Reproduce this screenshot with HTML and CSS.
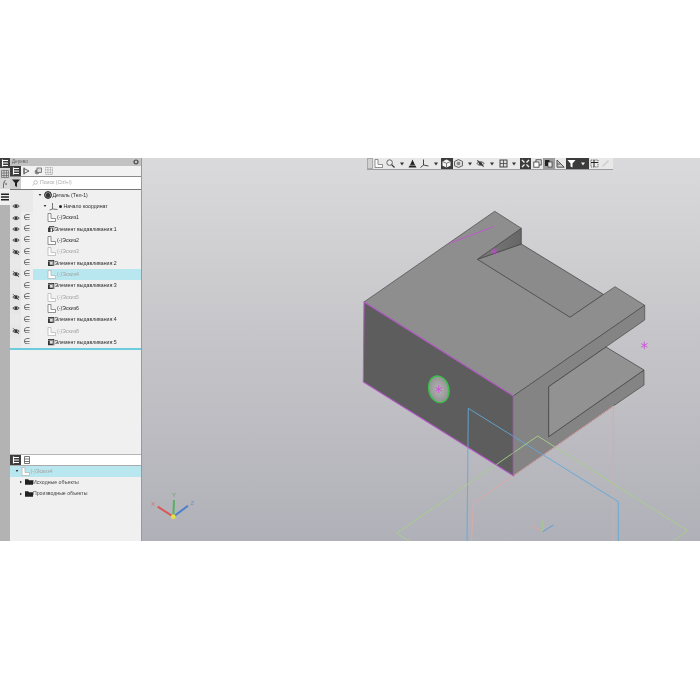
FILE: index.html
```html
<!DOCTYPE html>
<html lang="ru">
<head>
<meta charset="utf-8">
<title>Дерево</title>
<link rel="stylesheet" href="styles.css">
</head>
<body>
<svg class="defs" width="0" height="0" aria-hidden="true">
  <symbol id="eye" viewBox="0 0 10 8"><path d="M1 4C3 1.5 7 1.5 9 4 7 6.5 3 6.5 1 4Z" fill="none" stroke="#333" stroke-width="1"/><circle cx="5" cy="4" r="1.7" fill="#333"/></symbol>
  <symbol id="eyeoff" viewBox="0 0 10 8"><path d="M1 4C3 1.5 7 1.5 9 4 7 6.5 3 6.5 1 4Z" fill="none" stroke="#333" stroke-width="1"/><circle cx="5" cy="4" r="1.7" fill="#333"/><path d="M1.5 .5 8.5 7.5" stroke="#333" stroke-width="1.2"/></symbol>
  <symbol id="sketch" viewBox="0 0 9 9"><path d="M1 .5V8.5H8.5V5.5H4V.5Z" fill="#fff" stroke="#666" stroke-width=".7"/></symbol>
  <symbol id="sketchoff" viewBox="0 0 9 9"><path d="M1 .5V8.5H8.5V5.5H4V.5Z" fill="#fff" stroke="#b0b0b0" stroke-width=".7"/></symbol>
  <symbol id="extrude" viewBox="0 0 8 8"><rect x="0" y="0" width="8" height="8" fill="#333"/><rect x="2.2" y="2.2" width="3.6" height="3.6" fill="#ddd"/><path d="M0 1.6H6.4V8" fill="none" stroke="#eee" stroke-width=".6"/></symbol>
  <symbol id="extrudeopen" viewBox="0 0 8 8"><rect x="2" y=".5" width="5.5" height="5" fill="#fff" stroke="#333"/><rect x=".5" y="2.5" width="5" height="5" fill="#fff" stroke="#333"/><rect x=".5" y="2.5" width="2.6" height="5" fill="#333"/></symbol>
  <symbol id="tree" viewBox="0 0 8 8"><path d="M1.5 .5V7.5M1.5 1.5H7M1.5 4H7M1.5 6.5H7" stroke="currentColor" fill="none" stroke-width="1.1"/></symbol>
  <symbol id="folder" viewBox="0 0 10 7"><path d="M0 0H4L5 1.2H10V7H0Z" fill="#222"/></symbol>
  <symbol id="arrow" viewBox="0 0 6 6"><path d="M1 1.5H5L3 4.5Z" fill="#333"/></symbol>
</svg>

<main class="app">
  <nav class="strip">
    <div class="strip-top">
      <span class="strip-btn on"><svg class="i8"><use href="#tree"/></svg></span>
      <span class="strip-btn"><svg class="i8" viewBox="0 0 8 8"><path d="M.5.5h7v7h-7zM.5 3h7M.5 5.5h7M3 .5v7M5.5.5v7" fill="none" stroke="#666" stroke-width=".7"/></svg></span>
      <span class="strip-btn fx">f<sub>x</sub></span>
      <span class="strip-btn plain"><svg class="i8" viewBox="0 0 8 8"><path d="M0 1.2H8M0 4H8M0 6.8H8" stroke="#222" stroke-width="1.5"/></svg></span>
    </div>
  </nav>

  <aside class="panel">
    <header class="panel-head"><span>Дерево</span>
      <svg class="gear" viewBox="0 0 6 6"><circle cx="3" cy="3" r="2" fill="none" stroke="#444" stroke-width="1.2"/></svg>
    </header>
    <div class="tabs">
      <span class="tab on"><svg class="i8"><use href="#tree"/></svg></span>
      <span class="tab"><svg class="i8" viewBox="0 0 8 8"><path d="M1 .5V7.5M1 1.5 6 4 1 6.5Z" fill="none" stroke="#555" stroke-width=".9"/></svg></span>
      <span class="tab"><svg class="i8" viewBox="0 0 8 8"><circle cx="3" cy="5" r="2.4" fill="#888"/><rect x="3" y="1" width="4.5" height="4.5" fill="#ddd" stroke="#555" stroke-width=".7"/></svg></span>
      <span class="tab"><svg class="i8" viewBox="0 0 8 8"><path d="M.5.5h7v7h-7zM.5 3h7M.5 5.5h7M3 .5v7M5.5.5v7" fill="none" stroke="#999" stroke-width=".7" stroke-dasharray="1 .6"/></svg></span>
    </div>
    <div class="search">
      <span class="funnel"><svg class="i8" viewBox="0 0 8 8"><path d="M0 .5H8L5 4V8L3 7V4Z" fill="#222"/></svg></span>
      <div class="field">
        <svg class="loupe" viewBox="0 0 6 6"><circle cx="3.6" cy="2.4" r="1.8" fill="none" stroke="#aaa" stroke-width=".7"/><path d="M2.3 3.7.5 5.5" stroke="#aaa" stroke-width=".7"/></svg>
        <span>Поиск (Ctrl+/)</span>
      </div>
    </div>

    <div class="tree">
      <div class="row"><span class="c-eye blank"></span><span class="c-in blank"></span><span class="node lvl0"><svg class="arr"><use href="#arrow"/></svg><svg class="ico part" viewBox="0 0 8 8"><circle cx="4" cy="4" r="3.4" fill="#aaa" stroke="#222"/><path d="M2 3 4 1.5 6 3V5.5L4 7 2 5.5Z" fill="#333"/></svg>Деталь (Тел-1)</span></div>
      <div class="row"><span class="c-eye"><svg class="eye"><use href="#eye"/></svg></span><span class="c-in blank"></span><span class="node lvl1"><svg class="arr"><use href="#arrow"/></svg><svg class="ico" viewBox="0 0 9 8"><path d="M3.5 .5V6.5M.5 7.5 3.5 6.5 8.5 7" fill="none" stroke="#555" stroke-width=".8"/></svg><i class="dot"></i>Начало координат</span></div>
      <div class="row"><span class="c-eye"><svg class="eye"><use href="#eye"/></svg></span><span class="c-in">∈</span><span class="node lvl2"><svg class="ico"><use href="#sketch"/></svg>(-)Эскиз1</span></div>
      <div class="row"><span class="c-eye"><svg class="eye"><use href="#eye"/></svg></span><span class="c-in">∈</span><span class="node lvl2"><svg class="ico ex"><use href="#extrudeopen"/></svg>Элемент выдавливания:1</span></div>
      <div class="row"><span class="c-eye"><svg class="eye"><use href="#eye"/></svg></span><span class="c-in">∈</span><span class="node lvl2"><svg class="ico"><use href="#sketch"/></svg>(-)Эскиз2</span></div>
      <div class="row"><span class="c-eye"><svg class="eye"><use href="#eyeoff"/></svg></span><span class="c-in">∈</span><span class="node lvl2 off"><svg class="ico"><use href="#sketchoff"/></svg>(-)Эскиз3</span></div>
      <div class="row"><span class="c-eye blank"></span><span class="c-in">∈</span><span class="node lvl2"><svg class="ico ex"><use href="#extrude"/></svg>Элемент выдавливания:2</span></div>
      <div class="row"><span class="c-eye"><svg class="eye"><use href="#eyeoff"/></svg></span><span class="c-in">∈</span><span class="node lvl2 off sel"><svg class="ico"><use href="#sketchoff"/></svg>(-)Эскиз4</span></div>
      <div class="row"><span class="c-eye blank"></span><span class="c-in">∈</span><span class="node lvl2"><svg class="ico ex"><use href="#extrude"/></svg>Элемент выдавливания:3</span></div>
      <div class="row"><span class="c-eye"><svg class="eye"><use href="#eyeoff"/></svg></span><span class="c-in">∈</span><span class="node lvl2 off"><svg class="ico"><use href="#sketchoff"/></svg>(-)Эскиз5</span></div>
      <div class="row"><span class="c-eye"><svg class="eye"><use href="#eye"/></svg></span><span class="c-in">∈</span><span class="node lvl2"><svg class="ico"><use href="#sketch"/></svg>(-)Эскиз6</span></div>
      <div class="row"><span class="c-eye blank"></span><span class="c-in">∈</span><span class="node lvl2"><svg class="ico ex"><use href="#extrude"/></svg>Элемент выдавливания:4</span></div>
      <div class="row"><span class="c-eye"><svg class="eye"><use href="#eyeoff"/></svg></span><span class="c-in">∈</span><span class="node lvl2 off"><svg class="ico"><use href="#sketchoff"/></svg>(-)Эскиз8</span></div>
      <div class="row"><span class="c-eye blank"></span><span class="c-in">∈</span><span class="node lvl2"><svg class="ico ex"><use href="#extrude"/></svg>Элемент выдавливания:5</span></div>
      <div class="tree-end"></div>
    </div>

    <div class="lower">
      <div class="lower-tabs">
        <span class="tab on"><svg class="i8"><use href="#tree"/></svg></span>
        <span class="tab"><svg class="i8" viewBox="0 0 8 8"><path d="M1.5.5h5v7h-5zM1.5 3h5M1.5 5.5h5" fill="none" stroke="#555" stroke-width=".8"/></svg></span>
      </div>
      <div class="lrow sel off"><svg class="arr"><use href="#arrow"/></svg><svg class="ico"><use href="#sketchoff"/></svg>(-)Эскиз4</div>
      <div class="lrow sub"><svg class="arr side"><use href="#arrow"/></svg><svg class="fold"><use href="#folder"/></svg>Исходные объекты</div>
      <div class="lrow sub"><svg class="arr side"><use href="#arrow"/></svg><svg class="fold"><use href="#folder"/></svg>Производные объекты</div>
    </div>
  </aside>

  <section class="view">
    <svg class="scene" viewBox="142 158 558 383" aria-hidden="true">
      <defs>
        <linearGradient id="wedge" x1="0" y1="0" x2="1" y2="0"><stop offset="0" stop-color="#7c7c7c"/><stop offset="1" stop-color="#666"/></linearGradient>
        <radialGradient id="hole" cx=".5" cy=".5" r=".6"><stop offset="0" stop-color="#b4b4b4"/><stop offset="1" stop-color="#8c8c8c"/></radialGradient>
      </defs>
      <!-- part faces -->
      <polygon points="477.3,259.3 521.3,244 603.3,294.3 570,317.3" fill="#8b8b8b" stroke="#3e3e3e" stroke-width=".7"/>
      <polygon points="521.3,228.3 521.3,244 477.3,259.3" fill="url(#wedge)" stroke="#444" stroke-width=".7"/>
      <polygon points="494.7,211.3 521.3,228.3 477.3,259.3 570,317.3 615,286.7 644.7,305.3 513.3,396 364,302" fill="#8e8e8e" stroke="#4a4a4a" stroke-width=".7"/>
      <polygon points="513.3,396 644.7,305.3 644.7,320 548.7,386.7 548.7,436.7 644,370 644,385 613.3,406 513.3,475.7" fill="#848484" stroke="#4a4a4a" stroke-width=".7"/>
      <polygon points="548.7,386.7 606,347 644,370 548.7,436.7" fill="#929292" stroke="#3e3e3e" stroke-width=".7"/>
      <polygon points="364,302 513.3,396 513.3,475.7 363.3,382" fill="#5d5d5d"/>
      <!-- reference planes -->
      <path d="M513.3 475.7 473.3 503.3 471.5 541M613.3 406V541M513.3 475.7 613.3 406" fill="none" stroke="#e0a8a8" stroke-width=".9"/>
      <path d="M468.3 408.3 618.3 501.7V541M468.3 408.3 467 541" fill="none" stroke="#62a8d8" stroke-width=".9"/>
      <path d="M396.7 533.3 537.7 436 687.7 530.7 673 541M396.7 533.3 409 541" fill="none" stroke="#a8d088" stroke-width=".9"/>
      <!-- magenta edges -->
      <path d="M364 302 513.3 396V475.7L363.3 382Z" fill="none" stroke="#b858cc" stroke-width="1.1"/>
      <path d="M450 243 494 226.5" stroke="#c058d0" stroke-width="1" fill="none"/>
      <!-- hole -->
      <ellipse cx="438.8" cy="389.3" rx="10" ry="13.5" transform="rotate(-14 438.8 389.3)" fill="url(#hole)" stroke="#3cc04c" stroke-width="1.4"/>
      <!-- centre marks -->
      <g class="mark"><path d="M438.7 385.5v7.5M435.5 387.4l6.4 3.8M435.5 391.2l6.4-3.8"/><path d="M494 248v7M491 249.7l6 3.6M491 253.3l6-3.6"/><path d="M644.3 341.6v7.5M641 343.5l6.6 3.8M641 347.3l6.6-3.8"/></g>
      <!-- small origin axes -->
      <path d="M542.7 531.7 531.7 526" stroke="#e0a0a0" stroke-width=".9"/>
      <path d="M542.7 531.7V520.7" stroke="#a0d090" stroke-width=".9"/>
      <path d="M542.7 531.7 553.5 525" stroke="#5c9cd4" stroke-width="1"/>
      <!-- triad -->
      <path d="M173.3 516.7 157.7 506.7" stroke="#d85858" stroke-width="2"/>
      <path d="M173.3 516.7 174 500" stroke="#58b060" stroke-width="2"/>
      <path d="M173.3 516.7 188 505.7" stroke="#4880d0" stroke-width="2"/>
      <circle cx="173.3" cy="516.7" r="2.4" fill="#e4e040"/>
      <text class="ax" x="151" y="506" fill="#d07070">X</text>
      <text class="ax" x="172" y="497" fill="#70a070">Y</text>
      <text class="ax" x="190.5" y="505" fill="#7090c8">Z</text>
    </svg>

    <div class="toolbar">
      <span class="tb handle"></span>
      <span class="tb"><svg class="i9"><use href="#sketch"/></svg></span>
      <span class="tb"><svg class="i9" viewBox="0 0 9 9"><circle cx="3.6" cy="3.6" r="2.8" fill="#eee" stroke="#666"/><path d="M5.6 5.6 8.5 8.5" stroke="#333" stroke-width="1.2"/></svg></span>
      <span class="tb nar"><svg class="i6"><use href="#arrow"/></svg></span>
      <span class="tb"><svg class="i9" viewBox="0 0 9 9"><path d="M4.5 .5 6 4 8.5 8.5H.5L3 4Z" fill="#222"/><path d="M1 6.3H8" stroke="#ddd" stroke-width=".6"/></svg></span>
      <span class="tb"><svg class="i9" viewBox="0 0 9 9"><path d="M3.5.5V6M3.5 6 .5 8.5M3.5 6 8.5 7" fill="none" stroke="#333" stroke-width=".9"/></svg></span>
      <span class="tb nar"><svg class="i6"><use href="#arrow"/></svg></span>
      <span class="tb dark"><svg class="i9" viewBox="0 0 9 9"><path d="M4.5.5 8.5 2.5V6.8L4.5 8.5.5 6.8V2.5Z" fill="#f4f4f4"/><path d="M.5 2.5 4.5 4.3 8.5 2.5M4.5 4.3V8.5" fill="none" stroke="#444" stroke-width=".7"/></svg></span>
      <span class="tb"><svg class="i9" viewBox="0 0 9 9"><path d="M4.5.5 8.5 2.5V6.8L4.5 8.5.5 6.8V2.5Z" fill="#ddd" stroke="#444" stroke-width=".8"/><circle cx="4.5" cy="4.5" r="1.8" fill="#888"/></svg></span>
      <span class="tb nar"><svg class="i6"><use href="#arrow"/></svg></span>
      <span class="tb"><svg class="i9"><use href="#eyeoff"/></svg></span>
      <span class="tb nar"><svg class="i6"><use href="#arrow"/></svg></span>
      <span class="tb"><svg class="i9" viewBox="0 0 9 9"><rect x="1" y="1" width="7" height="7" fill="#ddd" stroke="#444"/><path d="M1 4.5H8M4.5 1V8" stroke="#444" stroke-width=".8"/></svg></span>
      <span class="tb nar"><svg class="i6"><use href="#arrow"/></svg></span>
      <span class="tb dark"><svg class="i9" viewBox="0 0 9 9"><path d="M1 1 3.5 3.5M8 1 5.5 3.5M1 8 3.5 5.5M8 8 5.5 5.5" stroke="#eee" stroke-width="1.4"/></svg></span>
      <span class="tb"><svg class="i9" viewBox="0 0 9 9"><rect x="3" y=".8" width="5.2" height="5.2" fill="#eee" stroke="#333" stroke-width=".8"/><rect x=".8" y="3" width="5.2" height="5.2" fill="#fff" stroke="#333" stroke-width=".8"/></svg></span>
      <span class="tb mid"><svg class="i9" viewBox="0 0 9 9"><rect x="1" y="1" width="4.5" height="6" fill="#222"/><rect x="4" y="3" width="4" height="5" fill="#e8e8e8" stroke="#222" stroke-width=".6"/></svg></span>
      <span class="tb"><svg class="i9" viewBox="0 0 9 9"><path d="M1 8.2V1L8.2 8.2Z" fill="#ccc" stroke="#333" stroke-width=".8"/><path d="M1 5H4.5" stroke="#333" stroke-width=".7"/></svg></span>
      <span class="tb dark"><svg class="i9" viewBox="0 0 9 9"><path d="M.5 1H8.5L5.5 4.5V8.5L3.5 7.5V4.5Z" fill="#fff"/></svg></span>
      <span class="tb nar dark"><svg class="i6" viewBox="0 0 6 6"><path d="M1 1.5H5L3 4.5Z" fill="#eee"/></svg></span>
      <span class="tb"><svg class="i9" viewBox="0 0 9 9"><rect x="1" y="1" width="7" height="7" fill="#eee" stroke="#555" stroke-width=".8" stroke-dasharray="1.4 .8"/><path d="M4 1V8M1 3.5H8" stroke="#222" stroke-width="1"/></svg></span>
      <span class="tb"><svg class="i9" viewBox="0 0 9 9"><path d="M1.5 7.5 7.5 1.5" stroke="#ccc" stroke-width="1.4"/></svg></span>
    </div>
  </section>
</main>
</body>
</html>
```

FILE: styles.css
```css
* { box-sizing: border-box; }
html, body { margin: 0; padding: 0; background: #fff; }
body { width: 700px; height: 700px; overflow: hidden; font-family: "Liberation Sans", Arial, sans-serif; }
.defs { display: block; height: 0; }
svg { display: block; flex: none; }

.app {
  display: flex;
  width: 700px;
  height: 383px;
  margin-top: 158px;
  filter: blur(0.45px);
  font-size: 5.2px;
  line-height: 1;
  color: #2c2c2c;
}

/* left strip */
.strip { width: 10px; flex: none; background: #b3b3b3; }
.strip-top { display: flex; flex-direction: column; background: #d4d4d4; height: 47px; }
.strip-btn { height: 10.5px; display: flex; align-items: center; justify-content: center; color: #fff; }
.strip-btn.on { background: #3d3d3d; }
.strip-btn.plain { background: #f0f0f0; height: 16px; }
.strip-btn.fx { background: #d9d9d9; color: #333; font-family: "Liberation Serif", serif; font-style: italic; font-size: 8px; }
.strip-btn.fx sub { font-size: 5px; }
.i8 { width: 8px; height: 8px; }
.i9 { width: 9px; height: 9px; }
.i6 { width: 6px; height: 6px; }

/* panel */
.panel { width: 132px; flex: none; display: flex; flex-direction: column; background: #f0f0f0; border-right: 1px solid #9a9a9a; }
.panel-head { height: 8px; flex: none; background: #c2c2c2; display: flex; align-items: center; justify-content: space-between; padding: 0 2px 0 2px; font-size: 4.6px; color: #666; }
.gear { width: 6px; height: 6px; }
.tabs { height: 11px; flex: none; display: flex; background: #f2f2f2; border-bottom: 1px solid #8a8a8a; }
.tab { width: 11px; height: 10px; display: flex; align-items: center; justify-content: center; color: #555; }
.tab.on { background: #3d3d3d; color: #fff; }
.search { height: 12.5px; flex: none; display: flex; border-bottom: 1px solid #777; }
.funnel { width: 11px; background: #cfcfcf; display: flex; align-items: center; justify-content: center; }
.field { flex: 1; background: #fff; display: flex; align-items: center; gap: 2px; padding-left: 11px; color: #aaa; }
.loupe { width: 6px; height: 6px; }

/* tree */
.tree { height: 264px; flex: none; }
.row { height: 11.33px; display: flex; align-items: stretch; }
.c-eye { width: 11px; background: #e6e6e6; display: flex; align-items: center; justify-content: center; }
.c-in { width: 12px; background: #eeeeee; display: flex; align-items: center; justify-content: center; color: #555; font-size: 8px; font-family: "DejaVu Sans", sans-serif; }
.c-eye.blank, .c-in.blank { background: #e9e9e9; }
.eye { width: 8px; height: 6.4px; }
.node { flex: 1; display: flex; align-items: center; white-space: nowrap; }
.lvl0 { padding-left: 5px; }
.lvl1 { padding-left: 10px; }
.lvl2 { padding-left: 14px; }
.off { color: #a4a4a4; }
.sel { background: #b9e7ef; }
.arr { width: 4px; height: 4px; margin-right: 1.5px; }
.arr.side { transform: rotate(-90deg); }
.ico { width: 9px; height: 9px; margin-right: 1px; }
.ico.ex { width: 6.5px; height: 6.5px; margin-right: 0; margin-left: 1px; }
.ico.part { width: 8px; height: 8px; }
.dot { width: 3.4px; height: 3.4px; border-radius: 50%; background: #222; margin: 0 1.5px 0 0; }
.tree-end { height: 2px; background: #6ccbdc; margin-top: -.5px; }

/* lower tree */
.lower { flex: 1; border-top: 0; display: flex; flex-direction: column; }
.lower-tabs { height: 12px; flex: none; display: flex; background: #fff; border-top: 1px solid #b5b5b5; border-bottom: 1px solid #aaa; }
.lrow { height: 11.3px; flex: none; display: flex; align-items: center; padding-left: 5px; white-space: nowrap; }
.lrow.sel { background: #b9e7ef; }
.lrow.sub { padding-left: 9px; color: #444; }
.fold { width: 8px; height: 6px; margin-right: .5px; }

/* 3D view */
.view { flex: 1; position: relative; background: linear-gradient(180deg, #dadadc 0%, #c4c4c8 50%, #b0b0b8 100%); overflow: hidden; }
.scene { position: absolute; inset: 0; width: 100%; height: 100%; }
.mark path { stroke: #d040e0; stroke-width: .8; fill: none; }
.ax { font-size: 6px; font-family: "Liberation Sans", sans-serif; }
.toolbar { position: absolute; top: 0; left: 225px; width: 246px; height: 12px; display: flex; align-items: center; background: #e8e8e8; border-bottom: 1px solid #9c9c9c; }
.tb { width: 11.6px; height: 11px; display: flex; align-items: center; justify-content: center; }
.tb.nar { width: 10.8px; }
.tb.handle { width: 6px; background: #d0d0d0; border: 1px solid #aaa; }
.tb.dark { background: #3c3c3c; }
.tb.mid { background: #9c9c9c; }
```
